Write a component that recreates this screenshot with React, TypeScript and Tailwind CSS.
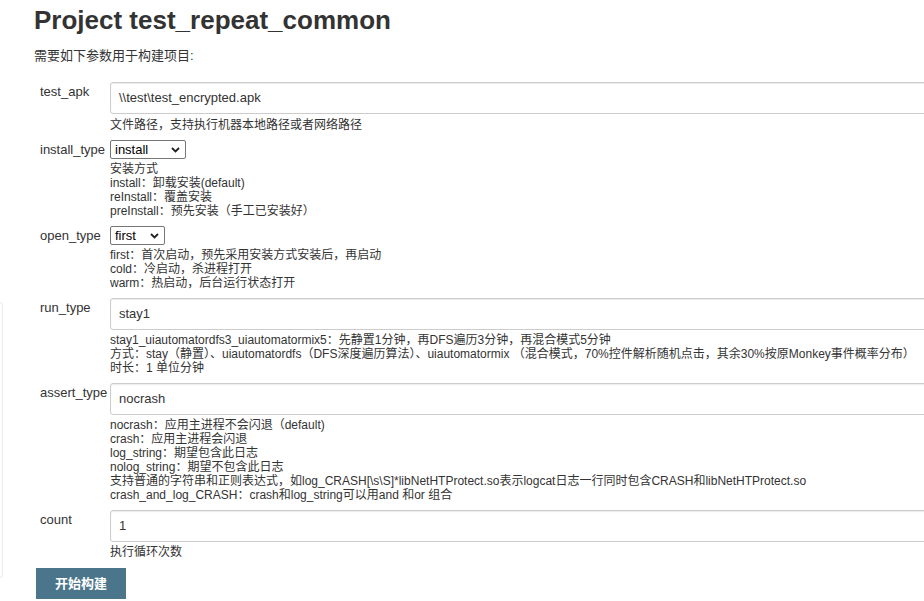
const FONT = 'font-["Liberation_Sans","Noto_Sans_CJK_SC",sans-serif]';

function TextInput({ value }: { value: string }) {
  return (
    <div className="h-[32px] w-full flex items-center px-[8px] border border-[#ccc] rounded-[3px] bg-white shadow-[inset_0_1px_1px_rgba(0,0,0,0.08)] text-[13px] text-[#333]">
      {value}
    </div>
  );
}

function Select({ value, width }: { value: string; width: string }) {
  return (
    <div
      className={`h-[19px] ${width} flex items-center justify-between pl-[4px] pr-[5px] border border-[#767676] rounded-[2px] bg-white text-[13px] text-black`}
    >
      <span className="leading-none">{value}</span>
      <svg width="9" height="6" viewBox="0 0 9 6" className="shrink-0">
        <polyline points="1,1 4.5,4.5 8,1" fill="none" stroke="#222" strokeWidth="1.8" />
      </svg>
    </div>
  );
}

function Desc({ lines }: { lines: string[] }) {
  return (
    <div className="mt-[3px] text-[12px] leading-[14px] text-[#333] whitespace-nowrap">
      {lines.map((l) => (
        <div key={l}>{l}</div>
      ))}
    </div>
  );
}

function Row({ label, children }: { label: string; children: React.ReactNode }) {
  return (
    <div className="grid grid-cols-[76px_1fr] mb-[8px]">
      <div className="pl-[6px] pt-[1px] text-[13px] leading-[18px] text-[#333]">{label}</div>
      <div>{children}</div>
    </div>
  );
}

export default function App() {
  return (
    <div className={`relative w-[924px] h-[601px] overflow-hidden bg-white ${FONT}`}>
      <div className="absolute left-[-20px] top-[302px] w-[23px] h-[276px] border border-[#ebebeb] rounded-[3px]" />
      <div className="pl-[34px]">
        <h1 className="mt-[5px] text-[26px] leading-[31px] font-bold text-[#333]">Project test_repeat_common</h1>
        <p className="mt-[11px] text-[13px] leading-[18px] text-[#333]">需要如下参数用于构建项目:</p>
      </div>
      <div className="pl-[34px] mt-[17px] w-[1020px]">
        <Row label="test_apk">
          <TextInput value="\\test\test_encrypted.apk" />
          <div className="mt-[4px] text-[12px] leading-[14px] text-[#333]">文件路径，支持执行机器本地路径或者网络路径</div>
        </Row>
        <Row label="install_type">
          <Select value="install" width="w-[76px]" />
          <Desc
            lines={[
              '安装方式',
              'install：卸载安装(default)',
              'reInstall：覆盖安装',
              'preInstall：预先安装（手工已安装好）',
            ]}
          />
        </Row>
        <Row label="open_type">
          <Select value="first" width="w-[55px]" />
          <Desc
            lines={[
              'first：首次启动，预先采用安装方式安装后，再启动',
              'cold：冷启动，杀进程打开',
              'warm：热启动，后台运行状态打开',
            ]}
          />
        </Row>
        <Row label="run_type">
          <TextInput value="stay1" />
          <Desc
            lines={[
              'stay1_uiautomatordfs3_uiautomatormix5：先静置1分钟，再DFS遍历3分钟，再混合模式5分钟',
              '方式：stay（静置）、uiautomatordfs（DFS深度遍历算法）、uiautomatormix （混合模式，70%控件解析随机点击，其余30%按原Monkey事件概率分布）',
              '时长：1 单位分钟',
            ]}
          />
        </Row>
        <Row label="assert_type">
          <TextInput value="nocrash" />
          <Desc
            lines={[
              'nocrash：应用主进程不会闪退（default)',
              'crash：应用主进程会闪退',
              'log_string：期望包含此日志',
              'nolog_string：期望不包含此日志',
              '支持普通的字符串和正则表达式，如log_CRASH[\\s\\S]*libNetHTProtect.so表示logcat日志一行同时包含CRASH和libNetHTProtect.so',
              'crash_and_log_CRASH：crash和log_string可以用and 和or 组合',
            ]}
          />
        </Row>
        <Row label="count">
          <TextInput value="1" />
          <Desc lines={['执行循环次数']} />
        </Row>
        <button className="ml-[2px] mt-[1px] w-[90px] h-[31px] bg-[#4b758b] text-white text-[13px] font-bold">
          开始构建
        </button>
      </div>
    </div>
  );
}
